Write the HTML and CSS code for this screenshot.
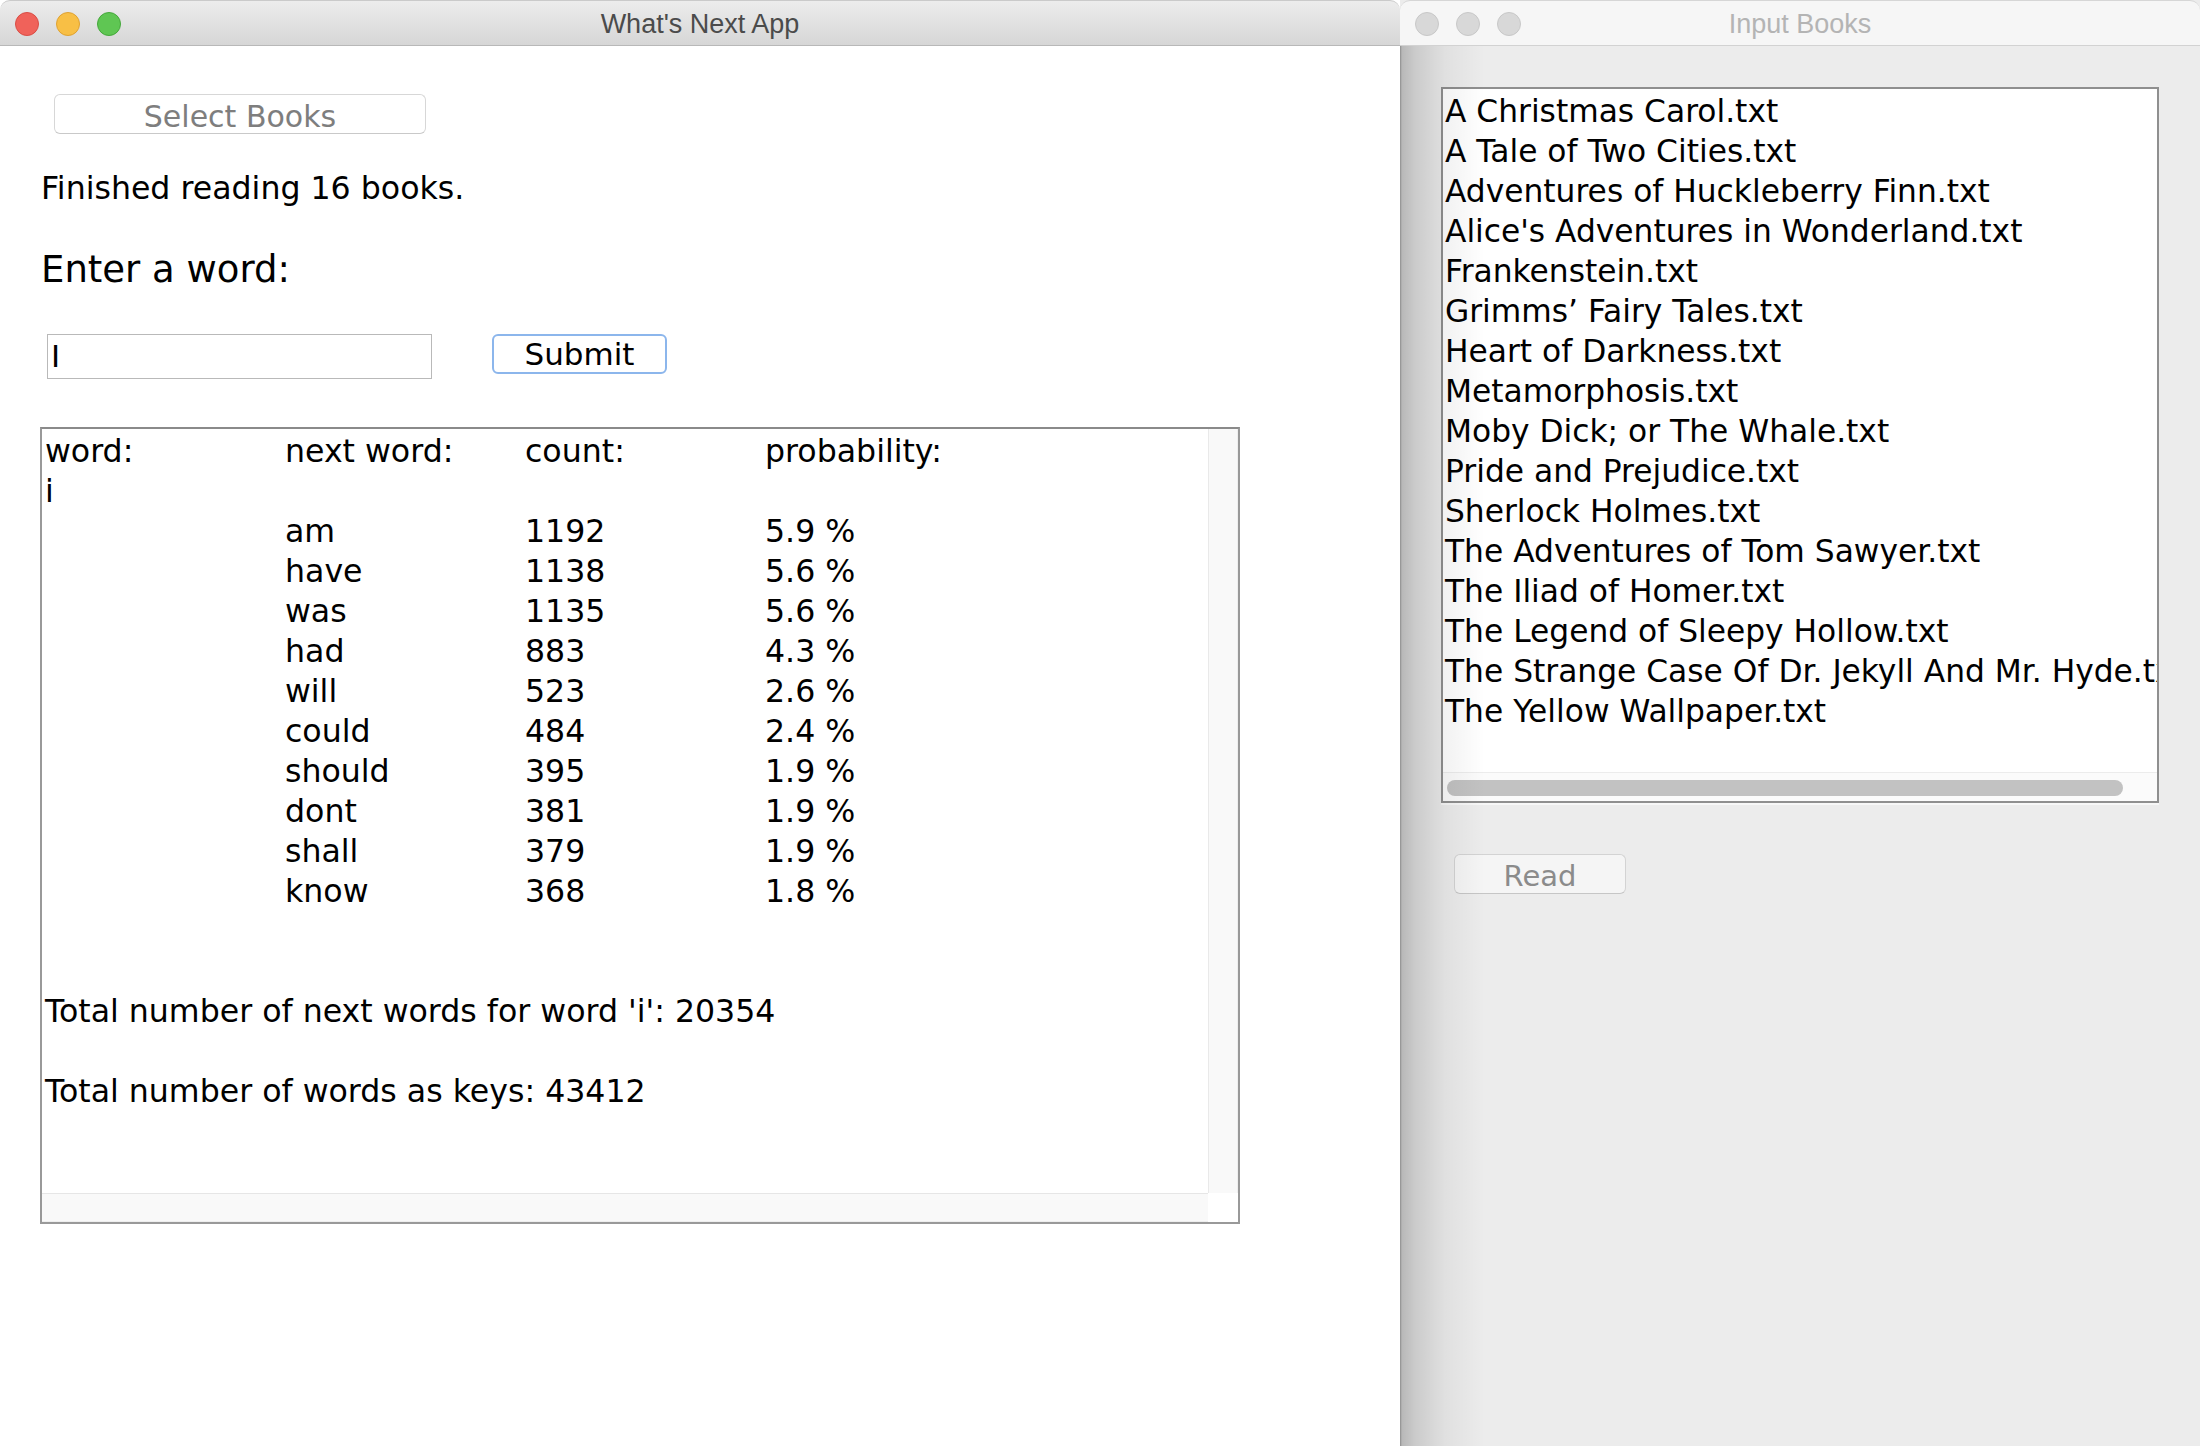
FILE: index.html
```html
<!DOCTYPE html>
<html lang="en">
<head>
<meta charset="utf-8">
<title>What's Next App</title>
<link rel="stylesheet" href="styles.css">
</head>
<body>
<div class="desktop">
  <section class="win win-main">
    <header class="titlebar titlebar-active">
      <div class="lights">
        <span class="light red"></span>
        <span class="light yellow"></span>
        <span class="light green"></span>
      </div>
      <div class="title">What's Next App</div>
      <div></div>
    </header>
    <div class="main-body">
      <button class="btn btn-select">Select Books</button>
      <p class="status">Finished reading 16 books.</p>
      <h2 class="prompt">Enter a word:</h2>
      <div class="entry">
        <div class="field">I</div>
        <button class="btn btn-submit">Submit</button>
      </div>
      <div class="textarea">
        <div class="ta-content">
          <div class="row"><span>word:</span><span>next word:</span><span>count:</span><span>probability:</span></div>
          <div class="row"><span>i</span><span></span><span></span><span></span></div>
          <div class="row"><span></span><span>am</span><span>1192</span><span>5.9 %</span></div>
          <div class="row"><span></span><span>have</span><span>1138</span><span>5.6 %</span></div>
          <div class="row"><span></span><span>was</span><span>1135</span><span>5.6 %</span></div>
          <div class="row"><span></span><span>had</span><span>883</span><span>4.3 %</span></div>
          <div class="row"><span></span><span>will</span><span>523</span><span>2.6 %</span></div>
          <div class="row"><span></span><span>could</span><span>484</span><span>2.4 %</span></div>
          <div class="row"><span></span><span>should</span><span>395</span><span>1.9 %</span></div>
          <div class="row"><span></span><span>dont</span><span>381</span><span>1.9 %</span></div>
          <div class="row"><span></span><span>shall</span><span>379</span><span>1.9 %</span></div>
          <div class="row"><span></span><span>know</span><span>368</span><span>1.8 %</span></div>
          <div class="line blank"></div>
          <div class="line blank"></div>
          <div class="line">Total number of next words for word 'i': 20354</div>
          <div class="line blank"></div>
          <div class="line">Total number of words as keys: 43412</div>
        </div>
        <div class="vtrack"></div>
        <div class="htrack"></div>
        <div class="corner"></div>
      </div>
    </div>
  </section>

  <section class="win win-books">
    <header class="titlebar titlebar-inactive">
      <div class="lights">
        <span class="light off"></span>
        <span class="light off"></span>
        <span class="light off"></span>
      </div>
      <div class="title">Input Books</div>
      <div></div>
    </header>
    <div class="books-body">
      <div class="listbox">
        <ul class="list">
          <li>A Christmas Carol.txt</li>
          <li>A Tale of Two Cities.txt</li>
          <li>Adventures of Huckleberry Finn.txt</li>
          <li>Alice's Adventures in Wonderland.txt</li>
          <li>Frankenstein.txt</li>
          <li>Grimms’ Fairy Tales.txt</li>
          <li>Heart of Darkness.txt</li>
          <li>Metamorphosis.txt</li>
          <li>Moby Dick; or The Whale.txt</li>
          <li>Pride and Prejudice.txt</li>
          <li>Sherlock Holmes.txt</li>
          <li>The Adventures of Tom Sawyer.txt</li>
          <li>The Iliad of Homer.txt</li>
          <li>The Legend of Sleepy Hollow.txt</li>
          <li>The Strange Case Of Dr. Jekyll And Mr. Hyde.txt</li>
          <li>The Yellow Wallpaper.txt</li>
        </ul>
        <div class="hbar"><div class="thumb"></div></div>
      </div>
      <button class="btn btn-read">Read</button>
    </div>
  </section>
</div>
</body>
</html>
```

FILE: styles.css
```css
html, body {
  margin: 0;
  padding: 0;
  height: 100%;
  background: #ffffff;
  overflow: hidden;
}

.desktop {
  display: flex;
  height: 1446px;
  width: 2200px;
  font-family: "DejaVu Sans", "Liberation Sans", sans-serif;
  color: #000;
}

.win {
  display: flex;
  flex-direction: column;
  height: 100%;
}

.win-main {
  width: 1400px;
  background: #ffffff;
  position: relative;
  z-index: 2;
}

.win-books {
  flex: 1;
  background: #ececec;
}

/* title bars */
.titlebar {
  box-sizing: border-box;
  height: 46px;
  padding-top: 2px;
  display: grid;
  grid-template-columns: 1fr auto 1fr;
  align-items: center;
  border-bottom: 1px solid #b8b8b8;
  border-radius: 10px 10px 0 0;
  font-family: "Liberation Sans", Arial, sans-serif;
  font-size: 27px;
}

.titlebar-active {
  background: linear-gradient(#ececec, #d6d6d6);
  border-top: 1px solid #cacaca;
}

.titlebar-inactive {
  background: #f6f6f6;
  border-top: 1px solid #d6d6d6;
  border-bottom-color: #d2d2d2;
}

.titlebar-active .title { color: #4b4b4b; }
.titlebar-inactive .title { color: #b4b4b4; }

.lights {
  display: flex;
  gap: 17px;
  padding-left: 15px;
}

.light {
  width: 24px;
  height: 24px;
  border-radius: 50%;
  box-sizing: border-box;
  border: 1px solid transparent;
}

.red { background: #f0625a; border-color: #d94d45; }
.yellow { background: #f8bf45; border-color: #dfa232; }
.green { background: #5fc653; border-color: #45a83b; }
.off { background: #d8d8d8; border-color: #c8c8c8; }

/* buttons */
.btn {
  font-family: "DejaVu Sans", sans-serif;
  box-sizing: border-box;
  background: #ffffff;
  border-radius: 6px;
  padding: 0;
  cursor: default;
}

/* main window */
.main-body {
  padding: 48px 0 0 40px;
  display: flex;
  flex-direction: column;
  align-items: flex-start;
}

.btn-select {
  margin-left: 14px;
  width: 372px;
  height: 40px;
  border: 1px solid #d7d7d7;
  border-bottom-color: #c9c9c9;
  color: #7e7e7e;
  font-size: 30px;
  line-height: 40px;
  padding-top: 2px;
}

.status {
  margin: 34px 0 0 1px;
  font-size: 31.6px;
  line-height: 40px;
}

.prompt {
  margin: 39px 0 0 1px;
  font-weight: normal;
  font-size: 37px;
  line-height: 46px;
}

.entry {
  margin-top: 41px;
  display: flex;
  align-items: flex-start;
  gap: 60px;
  margin-left: 7px;
}

.field {
  box-sizing: border-box;
  width: 385px;
  height: 45px;
  border: 1px solid #b9b9b9;
  font-size: 31px;
  line-height: 43px;
  padding-left: 3px;
}

.btn-submit {
  width: 175px;
  height: 40px;
  border: 2px solid #8cb6ec;
  font-size: 31px;
  line-height: 34px;
  color: #000;
}

.textarea {
  margin-top: 48px;
  box-sizing: border-box;
  width: 1200px;
  height: 797px;
  border: 2px solid #999999;
  border-top-color: #8a8a8a;
  display: grid;
  grid-template-columns: 1fr 30px;
  grid-template-rows: 1fr 29px;
  background: #fff;
}

.ta-content {
  padding: 2px 0 0 3px;
  font-size: 31.6px;
  line-height: 40px;
  white-space: nowrap;
  overflow: hidden;
}

.row {
  display: grid;
  grid-template-columns: 240px 240px 240px 1fr;
  height: 40px;
}

.line { height: 40px; }

.vtrack {
  background: #f9f9f9;
  border-left: 1px solid #e9e9e9;
  border-right: 1px solid #efefef;
}

.htrack {
  background: #f9f9f9;
  border-top: 1px solid #e6e6e6;
  border-bottom: 1px solid #eeeeee;
}

.corner { background: #ffffff; }

/* books window */
.books-body {
  position: relative;
  flex: 1;
  padding: 41px 0 0 41px;
  display: flex;
  flex-direction: column;
  align-items: flex-start;
}

.books-body::after {
  content: "";
  position: absolute;
  left: 0;
  top: 0;
  bottom: 0;
  width: 90px;
  background: linear-gradient(to right,
    rgba(0,0,0,0.40) 0px,
    rgba(0,0,0,0.22) 2px,
    rgba(0,0,0,0.14) 15px,
    rgba(0,0,0,0.05) 45px,
    rgba(0,0,0,0) 85px);
  pointer-events: none;
}

.listbox {
  box-sizing: border-box;
  width: 718px;
  height: 716px;
  border: 2px solid #8f8f8f;
  background: #ffffff;
  display: flex;
  flex-direction: column;
  box-shadow: 0 2px 0 #f7f7f7;
}

.list {
  list-style: none;
  margin: 0;
  padding: 2px 0 0 2px;
  flex: 1;
  overflow: hidden;
  font-size: 31.3px;
  line-height: 40px;
  white-space: nowrap;
}

.hbar {
  height: 29px;
  border-top: 1px solid #ececec;
  background: #fbfbfb;
  padding: 7px 0 0 4px;
  box-sizing: border-box;
}

.thumb {
  width: 676px;
  height: 16px;
  border-radius: 8px;
  background: #c2c2c2;
}

.btn-read {
  margin: 51px 0 0 13px;
  width: 172px;
  height: 40px;
  border: 1px solid #d3d3d3;
  border-bottom-color: #c6c6c6;
  background: #f5f5f5;
  color: #8b8b8b;
  font-size: 29px;
  line-height: 38px;
  padding-top: 2px;
}
```
